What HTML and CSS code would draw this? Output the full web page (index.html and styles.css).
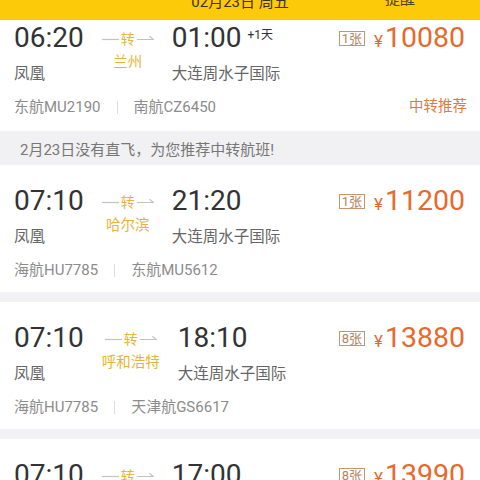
FILE: index.html
```html
<!DOCTYPE html>
<html lang="zh-CN">
<head>
  <meta charset="UTF-8">
  <meta name="viewport" content="width=device-width, initial-scale=1.0">
  <title>航班列表</title>
  <link rel="stylesheet" href="styles.css">
</head>
<body>
  <div class="topbar">
    <span></span>
    <span class="topbar-date">02月23日 周五</span>
    <span class="topbar-remind">提醒</span>
  </div>

  <div class="flight flight-first">
    <div class="flight-main">
      <div class="leg">
        <div class="time">06:20</div>
        <div class="airport">凤凰</div>
      </div>
      <div class="via">
        <div class="via-arrow">
          <svg class="dash" width="17" height="8" viewBox="0 0 17 8"><path d="M0 5.5H17" stroke="#c2c2c2" stroke-width="1.2"/></svg>
          <span>转</span>
          <svg class="dash" width="17" height="8" viewBox="0 0 17 8"><path d="M0 5.5H16.5L12.5 2.3" fill="none" stroke="#c2c2c2" stroke-width="1.2"/></svg>
        </div>
        <div class="via-city">兰州</div>
      </div>
      <div class="leg">
        <div class="time">01:00<span class="next-day">+1天</span></div>
        <div class="airport">大连周水子国际</div>
      </div>
      <div class="price">
        <span class="seats">1张</span>
        <span class="yen">¥</span><span class="amount">10080</span>
      </div>
    </div>
    <div class="flight-foot">
      <div class="airlines"><span>东航MU2190</span><span class="divider"></span><span>南航CZ6450</span></div>
      <span class="tag">中转推荐</span>
    </div>
  </div>

  <div class="notice">2月23日没有直飞，为您推荐中转航班!</div>

  <div class="flight">
    <div class="flight-main">
      <div class="leg">
        <div class="time">07:10</div>
        <div class="airport">凤凰</div>
      </div>
      <div class="via">
        <div class="via-arrow">
          <svg class="dash" width="17" height="8" viewBox="0 0 17 8"><path d="M0 5.5H17" stroke="#c2c2c2" stroke-width="1.2"/></svg>
          <span>转</span>
          <svg class="dash" width="17" height="8" viewBox="0 0 17 8"><path d="M0 5.5H16.5L12.5 2.3" fill="none" stroke="#c2c2c2" stroke-width="1.2"/></svg>
        </div>
        <div class="via-city">哈尔滨</div>
      </div>
      <div class="leg">
        <div class="time">21:20</div>
        <div class="airport">大连周水子国际</div>
      </div>
      <div class="price">
        <span class="seats">1张</span>
        <span class="yen">¥</span><span class="amount">11200</span>
      </div>
    </div>
    <div class="flight-foot">
      <div class="airlines"><span>海航HU7785</span><span class="divider"></span><span>东航MU5612</span></div>
    </div>
  </div>

  <div class="flight">
    <div class="flight-main">
      <div class="leg">
        <div class="time">07:10</div>
        <div class="airport">凤凰</div>
      </div>
      <div class="via">
        <div class="via-arrow">
          <svg class="dash" width="17" height="8" viewBox="0 0 17 8"><path d="M0 5.5H17" stroke="#c2c2c2" stroke-width="1.2"/></svg>
          <span>转</span>
          <svg class="dash" width="17" height="8" viewBox="0 0 17 8"><path d="M0 5.5H16.5L12.5 2.3" fill="none" stroke="#c2c2c2" stroke-width="1.2"/></svg>
        </div>
        <div class="via-city">呼和浩特</div>
      </div>
      <div class="leg">
        <div class="time">18:10</div>
        <div class="airport">大连周水子国际</div>
      </div>
      <div class="price">
        <span class="seats">8张</span>
        <span class="yen">¥</span><span class="amount">13880</span>
      </div>
    </div>
    <div class="flight-foot">
      <div class="airlines"><span>海航HU7785</span><span class="divider"></span><span>天津航GS6617</span></div>
    </div>
  </div>

  <div class="flight">
    <div class="flight-main">
      <div class="leg">
        <div class="time">07:10</div>
        <div class="airport">凤凰</div>
      </div>
      <div class="via">
        <div class="via-arrow">
          <svg class="dash" width="17" height="8" viewBox="0 0 17 8"><path d="M0 5.5H17" stroke="#c2c2c2" stroke-width="1.2"/></svg>
          <span>转</span>
          <svg class="dash" width="17" height="8" viewBox="0 0 17 8"><path d="M0 5.5H16.5L12.5 2.3" fill="none" stroke="#c2c2c2" stroke-width="1.2"/></svg>
        </div>
      </div>
      <div class="leg">
        <div class="time">17:00</div>
        <div class="airport">大连周水子国际</div>
      </div>
      <div class="price">
        <span class="seats">8张</span>
        <span class="yen">¥</span><span class="amount">13990</span>
      </div>
    </div>
  </div>
</body>
</html>
```

FILE: styles.css
```css
body {
  margin: 0;
  background: #fff;
  font-family: Roboto, "Noto Sans CJK SC", sans-serif;
  color: #333;
  overflow: hidden;
}
.topbar {
  height: 20px;
  background: #fdca0a;
  display: grid;
  grid-template-columns: 1fr auto 1fr;
  align-items: start;
  overflow: hidden;
}
.topbar-date {
  font-size: 15px;
  line-height: 16px;
  margin-top: -6px;
  color: #3a3320;
}
.topbar-remind {
  justify-self: end;
  margin-right: 65px;
  font-size: 15px;
  line-height: 16px;
  margin-top: -9px;
  color: #4a4330;
}
.flight {
  background: #fff;
  padding: 20px 15px 12px 14px;
}
.flight + .flight {
  border-top: 10px solid #f2f2f4;
}
.flight-first {
  padding-top: 2px;
  padding-bottom: 14px;
}
.flight-main {
  display: flex;
  align-items: flex-start;
  gap: 18px;
}
.leg {
  display: flex;
  flex-direction: column;
  gap: 10px;
}
.time {
  display: flex;
  align-items: flex-start;
  font-size: 28px;
  line-height: 32px;
  color: #333;
}
.next-day {
  font-size: 12px;
  line-height: 12px;
  margin: 7px 0 0 6px;
}
.airport {
  font-size: 15.5px;
  line-height: 20px;
  color: #666;
  white-space: nowrap;
}
.via {
  display: flex;
  flex-direction: column;
  align-items: center;
}
.via-arrow {
  height: 32px;
  display: flex;
  align-items: center;
  gap: 2px;
  font-size: 14px;
  color: #e6b43a;
}
.via-city {
  font-size: 14.5px;
  line-height: 18px;
  color: #e6b43a;
  white-space: nowrap;
}
.price {
  margin-left: auto;
  height: 32px;
  display: flex;
  align-items: baseline;
  color: #e8692c;
}
.seats {
  align-self: center;
  border: 1px solid #c9956c;
  color: #b5845e;
  font-size: 13px;
  line-height: 13px;
  padding: 0 2px;
  margin-right: 9px;
}
.yen {
  font-size: 17px;
  margin-right: 2px;
}
.amount {
  font-size: 28.5px;
  line-height: 32px;
}
.flight-foot {
  margin-top: 13px;
  display: flex;
  justify-content: space-between;
  align-items: center;
}
.airlines {
  display: flex;
  align-items: center;
  font-size: 15px;
  line-height: 20px;
  color: #8c8c8c;
}
.divider {
  width: 1px;
  height: 13px;
  background: #ddd;
  margin: 0 16px;
}
.tag {
  font-size: 14.5px;
  line-height: 20px;
  color: #e27a3a;
  margin-right: -2px;
}
.notice {
  height: 34px;
  display: flex;
  align-items: center;
  padding-left: 20px;
  background: #f1f1f3;
  font-size: 15px;
  color: #777;
}
```
